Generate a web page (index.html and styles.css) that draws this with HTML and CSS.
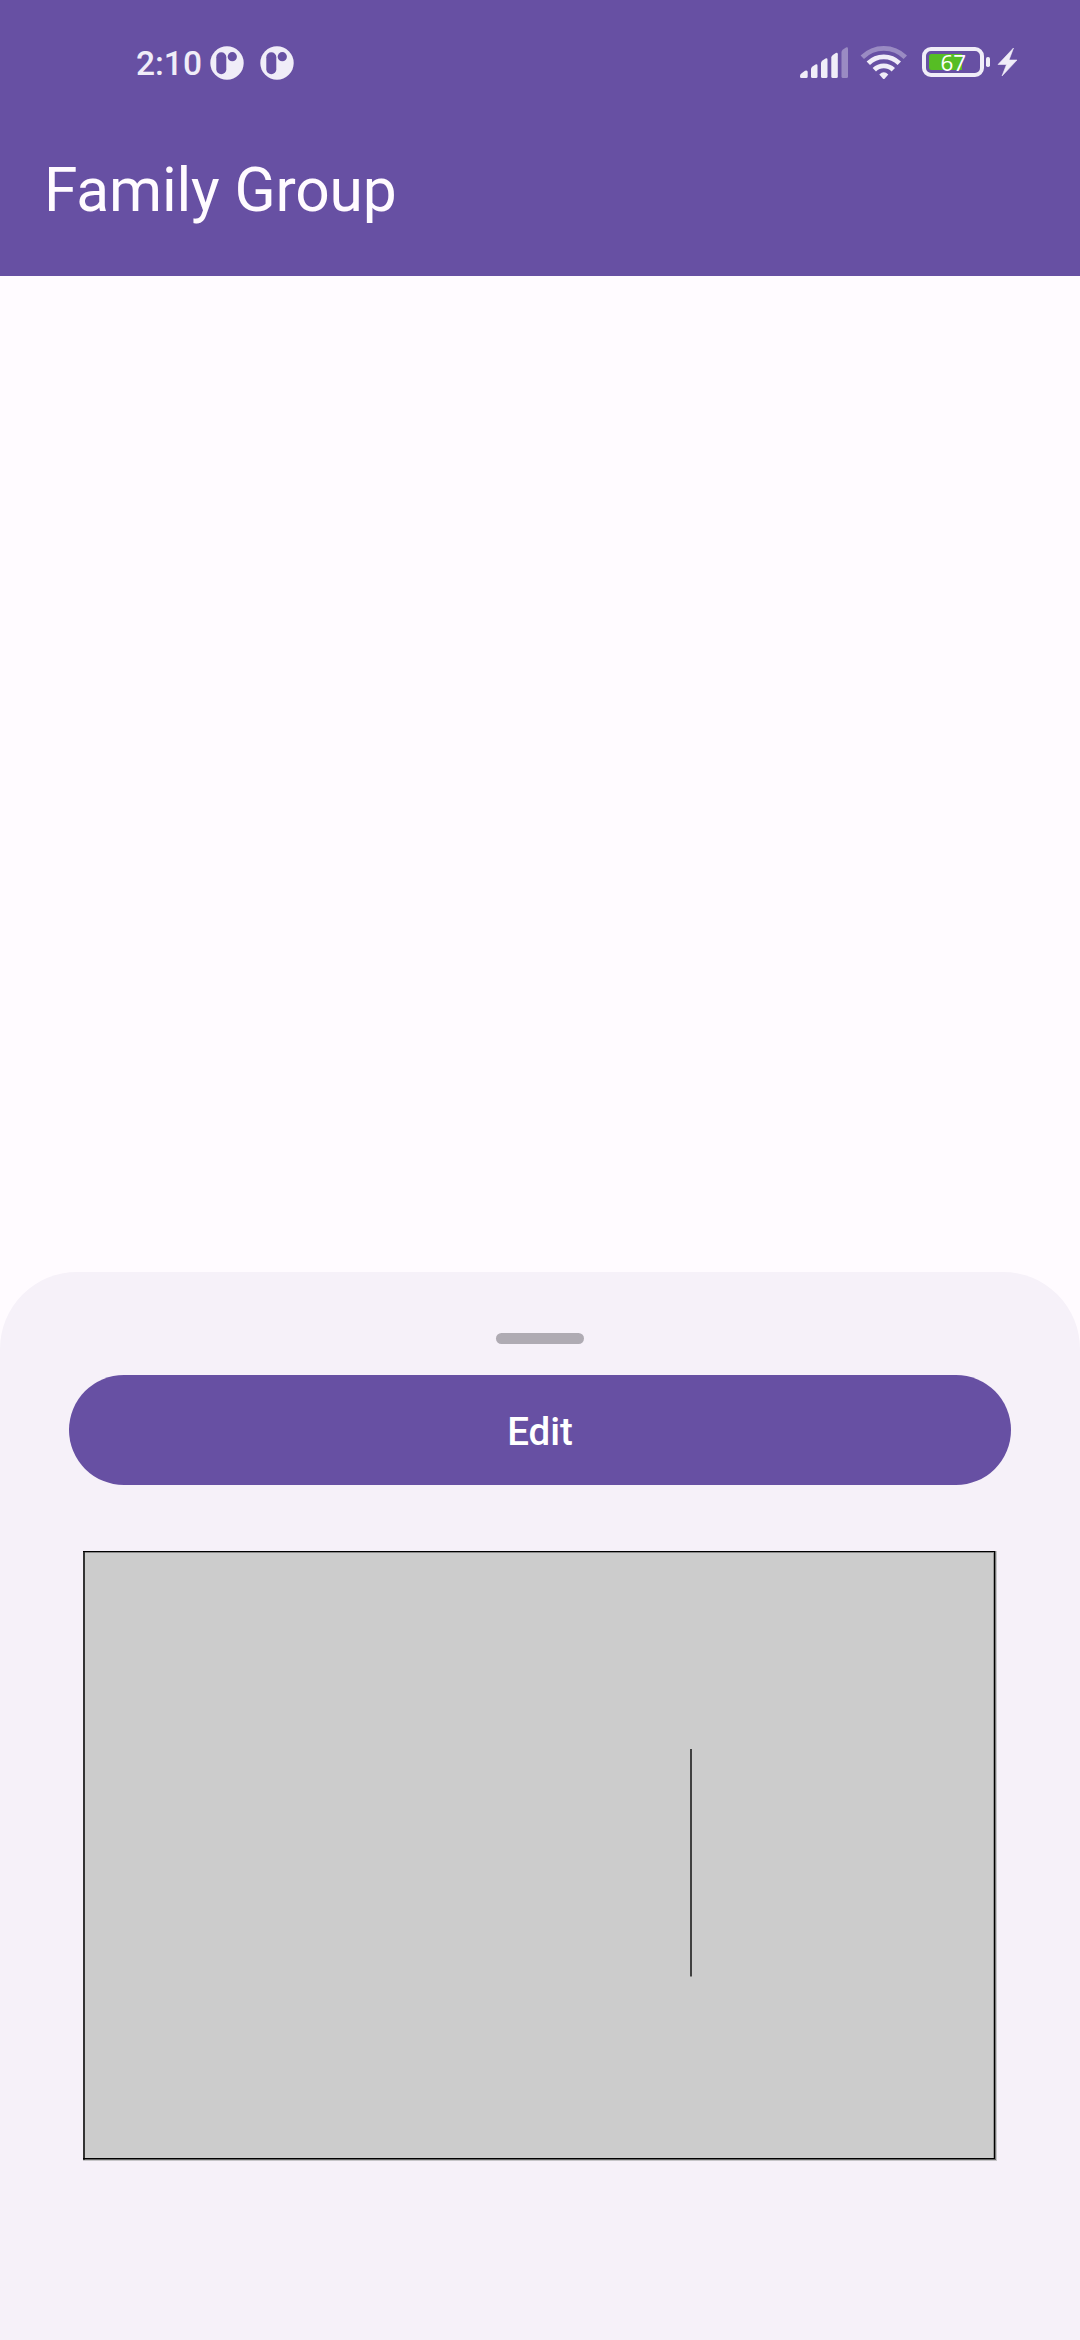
FILE: index.html
```html
<!DOCTYPE html>
<html lang="en">
<head>
<meta charset="utf-8">
<title>Family Group</title>
<link rel="stylesheet" href="styles.css">
</head>
<body>
<div class="screen">
  <header class="header">
    <div class="status">
      <div class="status-left">
        <span class="clock">2:10</span>
        <svg class="app-icon" viewBox="0 0 34 34"><circle cx="17" cy="17" r="16.7" fill="#f0edf8"/><rect x="6.3" y="6.3" width="10" height="22" rx="5" fill="#6750a3"/><circle cx="22.3" cy="10.7" r="4.6" fill="#6750a3"/></svg>
        <svg class="app-icon" viewBox="0 0 34 34"><circle cx="17" cy="17" r="16.7" fill="#f0edf8"/><rect x="6.3" y="6.3" width="10" height="22" rx="5" fill="#6750a3"/><circle cx="22.3" cy="10.7" r="4.6" fill="#6750a3"/></svg>
      </div>
      <svg class="status-right" viewBox="0 0 250 65">
        <g fill="#f0edf8">
          <path d="M10 46q0-2 2-3l3-2.300q2.700-1 2.700 1.300v4.500q0 1.500-1.500 1.500h-4.700q-1.500 0-1.500-1.500z"/>
          <path d="M21 39q0-1.500 1.500-2.500l3-2q2-.700 2 1.300v10.700q0 1.500-1.500 1.500h-3.500q-1.500 0-1.500-1.500z"/>
          <path d="M31 33q0-1.500 1.500-2.500l3-2q2-.700 2 1.300v16.700q0 1.500-1.500 1.500h-3.500q-1.500 0-1.500-1.500z"/>
          <path d="M41.300 27.500q0-1.500 1.500-2.500l3-2q2-.700 2 1.300v22.200q0 1.500-1.500 1.500h-3.500q-1.500 0-1.500-1.500z"/>
          <path opacity=".38" d="M51.500 22q0-1.500 1.500-2.500l3-2q2-.700 2 1.300v27.700q0 1.500-1.500 1.500H53q-1.500 0-1.500-1.500z"/>
          <path d="M89.300 44.500q4.500-4.500 9 0l-3.500 4q-1 1-2 0z"/>
        </g>
        <g fill="none" stroke="#f0edf8" stroke-width="4.800">
          <path opacity=".38" d="M72.300 27.200a30.500 30.500 0 0 1 43 0"/>
          <path d="M78.300 33.200a22 22 0 0 1 31 0"/>
          <path d="M84.300 39.800a13.500 13.500 0 0 1 19 0"/>
        </g>
        <rect x="134" y="19" width="58" height="26" rx="7" fill="none" stroke="#f0edf8" stroke-width="4"/>
        <path d="M141.500 24H172v16h-30.500q-2.500 0-2.500-2.500v-11q0-2.500 2.500-2.500z" fill="#56bd24"/>
        <rect x="196" y="27" width="4" height="10" rx="1.800" fill="#f0edf8"/>
        <path d="M223.500 18L208 34.500h8.500L212 46l15-16h-8z" fill="#f0edf8" stroke="#f0edf8" stroke-width=".6" stroke-linejoin="round"/>
        <text class="charge" x="163.300" y="41" text-anchor="middle">67</text>
      </svg>
    </div>
    <h1 class="title">Family Group</h1>
  </header>
  <main class="content"></main>
  <section class="sheet">
    <div class="handle"></div>
    <button class="edit">Edit</button>
    <svg class="drawing" viewBox="0 0 914 610" shape-rendering="crispEdges">
      <rect width="913" height="609" fill="#ccc"/>
      <rect x="910" width="1" height="609" fill="#999"/>
      <rect x="912" width="1" height="609" fill="#777"/>
      <rect x="913" width="1" height="610" fill="#c6c5c8"/>
      <rect y="608" width="913" height="1" fill="#666"/>
      <rect y="609" width="914" height="1" fill="#c6c5c8"/>
      <rect y="1" width="912" height="1" fill="#888"/>
      <rect width="2" height="609" fill="#333"/>
      <rect width="912" height="1" fill="#000"/>
      <rect x="911" width="1" height="608" fill="#000"/>
      <rect y="607" width="912" height="1" fill="#000"/>
      <rect x="607" y="198" width="2" height="227" fill="#404040"/>
      <rect x="607" y="425" width="2" height="1" fill="#888"/>
    </svg>
  </section>
</div>
</body>
</html>
```
FILE: styles.css
```css
body {
  margin: 0;
  font-family: Roboto, sans-serif;
}

.screen {
  display: flex;
  flex-direction: column;
  height: 2340px;
  background: #fffbff;
}

.header {
  height: 276px;
  background: #6750a3;
  color: #fffbff;
}

.status {
  display: flex;
  justify-content: space-between;
  box-sizing: border-box;
  height: 125px;
  padding: 30px 40px 0 135px;
}

.status-left {
  display: flex;
  align-items: center;
  height: 65px;
}

.clock {
  box-sizing: border-box;
  width: 75px;
  padding-left: 1px;
  font-size: 33.5px;
  font-weight: 500;
  line-height: 65px;
  padding-top: 1px;
  color: #f0edf8;
}

.app-icon {
  width: 34px;
  height: 34px;
  margin-right: 16px;
}

.status-right {
  width: 250px;
  height: 65px;
}

.charge {
  font: 500 22.5px "Open Sans", sans-serif;
  fill: #fff;
}

.title {
  margin: 0;
  padding-left: 44px;
  font-size: 60.5px;
  font-weight: 400;
  line-height: 132px;
  letter-spacing: -0.15px;
}

.content {
  flex: 1;
}

.sheet {
  display: flex;
  flex-direction: column;
  align-items: center;
  box-sizing: border-box;
  height: 1068px;
  padding-top: 61px;
  border-radius: 77px 77px 0 0;
  background: #f6f1f9;
}

.handle {
  width: 88px;
  height: 11px;
  border-radius: 6px;
  background: #afabb3;
}

.edit {
  width: 942px;
  height: 110px;
  margin: 31px 0 66px;
  padding: 3px 0 0;
  border: 0;
  border-radius: 55px;
  background: #6750a3;
  color: #fff;
  font: 500 38.5px Roboto, sans-serif;
}

.drawing {
  width: 914px;
  height: 610px;
}
```
